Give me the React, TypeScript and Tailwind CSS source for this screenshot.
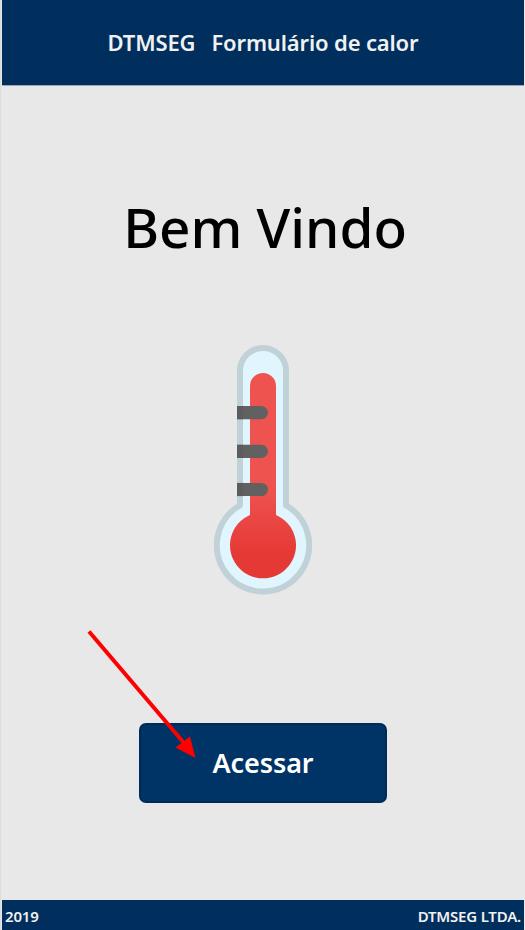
interface TickProps {
  y: number;
}

function Tick({ y }: TickProps) {
  return (
    <g>
      <path d={`M23 ${y}h24.4a6.6 6.6 0 0 1 0 13.2H23z`} fill="#616161" />
      <path d={`M23 ${y}h6v13.2h-6z`} fill="#5a5c5d" />
    </g>
  );
}

function Thermometer() {
  return (
    <svg className="w-[98px] h-[250px]" viewBox="0 0 98 250" fill="none">
      <defs>
        <linearGradient
          id="mercury"
          gradientUnits="userSpaceOnUse"
          x1="49"
          y1="143"
          x2="49"
          y2="210"
        >
          <stop offset="0" stopColor="#ef5350" />
          <stop offset="1" stopColor="#e53935" />
        </linearGradient>
      </defs>

      <path
        d="M26 160.3V26a23 23 0 0 1 46 0V160.3A46.2 46.2 0 1 1 26 160.3z"
        fill="#e1f5fe"
        stroke="#c0d1d8"
        strokeWidth="6"
        strokeLinejoin="round"
      />
      <path
        d="M36 170V41a13 13 0 0 1 26 0V170A33 33 0 1 1 36 170z"
        fill="url(#mercury)"
      />

      <Tick y={61} />
      <Tick y={99.8} />
      <Tick y={137.9} />
    </svg>
  );
}

function Arrow() {
  return (
    <svg
      className="absolute left-[83px] top-[627px] w-[115px] h-[135px] pointer-events-none"
      viewBox="84 627 115 135"
    >
      <path d="M89 631.5 184 743" stroke="#ff0000" strokeWidth="4" />
      <path d="M195.5 758 175.5 747.5 190 736.5z" fill="#ff0000" />
    </svg>
  );
}

export default function App() {
  return (
    <div className="relative w-[525px] h-[930px] flex flex-col overflow-hidden bg-[#e8e8e8] border-l border-[#dcdcdc] font-['Noto_Sans',sans-serif]">
      <header className="h-[85px] shrink-0 ml-px mr-px flex items-center justify-center gap-4 bg-[#002e5d] text-[#f1f1f1] text-[22px] font-semibold tracking-[-0.15px] shadow-[0_1px_0_#9aa7b8]">
        <span>DTMSEG</span>
        <span>Formulário de calor</span>
      </header>

      <main className="flex-1 flex flex-col items-center">
        <h1 className="mt-[104px] h-[78px] leading-[76px] pl-1 text-[54.8px] font-medium text-black whitespace-nowrap">
          Bem Vindo
        </h1>

        <div className="mt-[78px]">
          <Thermometer />
        </div>

        <button className="mt-32 w-[248px] h-20 rounded-[7px] border-2 border-[#002b57] bg-[#003366] text-white text-[27px] font-semibold tracking-[-0.1px]">
          Acessar
        </button>
      </main>

      <footer className="h-[30px] shrink-0 ml-px mr-px pt-[2px] pl-[3px] pr-[3px] flex items-center justify-between bg-[#002e5d] text-[#f1f1f1] text-[15px] font-semibold tracking-[-0.2px]">
        <span>2019</span>
        <span>DTMSEG LTDA.</span>
      </footer>

      <Arrow />
    </div>
  );
}
